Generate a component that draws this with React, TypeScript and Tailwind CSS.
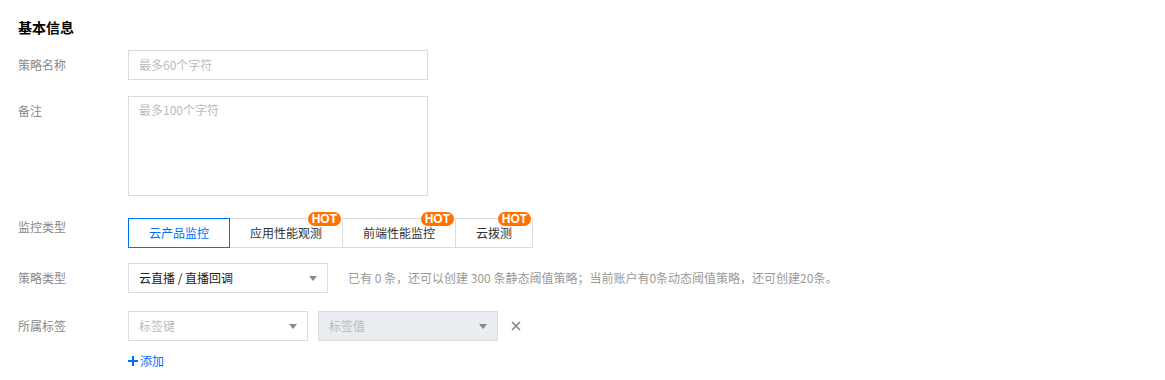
import React from "react";

const font = { fontFamily: '"Noto Sans CJK SC", "Noto Sans", sans-serif' };

function Caret() {
  return (
    <svg width="8" height="5" viewBox="0 0 8 5" className="shrink-0">
      <path d="M0 0 L8 0 L4 5 Z" fill="#888" />
    </svg>
  );
}

function Hot() {
  return (
    <span className="absolute -top-[7px] right-[1px] h-[14px] px-[4px] rounded-full bg-[#ff7200] text-white text-[12px] font-bold leading-[14px]" style={{ fontFamily: '"Liberation Sans", Arial, sans-serif' }}>
      HOT
    </span>
  );
}

function Label({ children }: { children: React.ReactNode }) {
  return <div className="w-[110px] shrink-0 pt-[6px] leading-[18px] text-[12px] text-[#888]">{children}</div>;
}

export default function App() {
  const tabs = [
    { t: "云产品监控", active: true, hot: false },
    { t: "应用性能观测", active: false, hot: true },
    { t: "前端性能监控", active: false, hot: true },
    { t: "云拨测", active: false, hot: true },
  ];
  return (
    <div className="min-h-[380px] w-[1165px] bg-white pl-[18px] pt-[17px]" style={font}>
      <div className="h-[20px] leading-[20px] text-[14px] font-bold text-black">基本信息</div>

      <div className="mt-[13px] flex">
        <Label>策略名称</Label>
        <div className="h-[30px] w-[300px] border border-[#dcdcdc] px-[10px] text-[12px] leading-[28px] text-[#bbb]">最多60个字符</div>
      </div>

      <div className="mt-[16px] flex">
        <Label>备注</Label>
        <div className="h-[100px] w-[300px] border border-[#dcdcdc] px-[10px] pt-[4px] text-[12px] leading-[18px] text-[#bbb]">最多100个字符</div>
      </div>

      <div className="mt-[16px] flex">
        <Label>监控类型</Label>
        <div className="mt-[6px] flex">
          {tabs.map((x, i) => (
            <div
              key={x.t}
              className={
                "relative h-[30px] px-[20px] text-[12px] leading-[28px] border " +
                (i > 0 ? "-ml-px " : "") +
                (x.active ? "z-10 border-[#006eff] text-[#006eff]" : "border-[#dcdcdc] text-[#333]")
              }
            >
              {x.t}
              {x.hot && <Hot />}
            </div>
          ))}
        </div>
      </div>

      <div className="mt-[15px] flex">
        <Label>策略类型</Label>
        <div className="flex h-[30px] w-[200px] items-center justify-between border border-[#dcdcdc] pl-[10px] pr-[10px] text-[12px] text-[#222]">
          <span>云直播 / 直播回调</span>
          <Caret />
        </div>
        <div className="ml-[20px] text-[12px] leading-[30px] text-[#999]">
          已有 0 条，还可以创建 300 条静态阈值策略；当前账户有0条动态阈值策略，还可创建20条。
        </div>
      </div>

      <div className="mt-[18px] flex">
        <Label>所属标签</Label>
        <div>
          <div className="flex items-center">
            <div className="flex h-[30px] w-[180px] items-center justify-between border border-[#dcdcdc] px-[10px] text-[12px] text-[#bbb]">
              <span>标签键</span>
              <Caret />
            </div>
            <div className="ml-[10px] flex h-[30px] w-[180px] items-center justify-between border border-[#dcdcdc] bg-[#e9ecf1] px-[10px] text-[12px] text-[#bbb]">
              <span>标签值</span>
              <Caret />
            </div>
            <svg width="10" height="10" viewBox="0 0 10 10" className="ml-[13px]">
              <path d="M1 1 L9 9 M9 1 L1 9" stroke="#888" strokeWidth="1.7" />
            </svg>
          </div>
          <div className="mt-[11px] flex items-center text-[12px] leading-[18px] text-[#006eff]">
            <svg width="10" height="10" viewBox="0 0 10 10" className="mr-[2px]">
              <path d="M5 0 V10 M0 5 H10" stroke="#006eff" strokeWidth="2" />
            </svg>
            添加
          </div>
        </div>
      </div>
    </div>
  );
}
